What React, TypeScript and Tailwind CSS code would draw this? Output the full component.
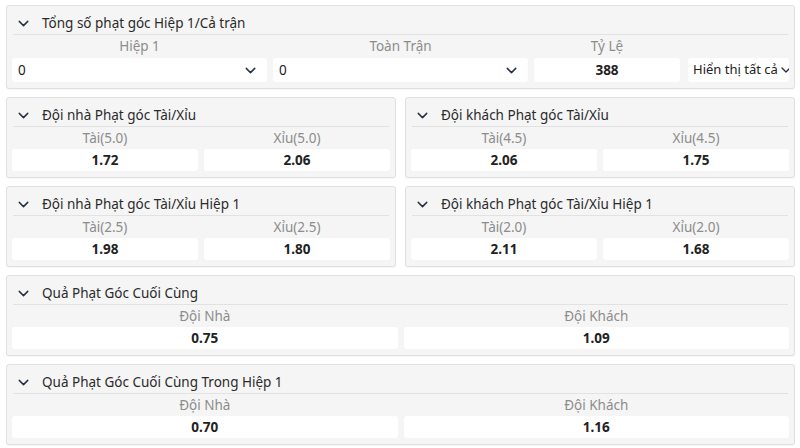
import { ChevronDown } from "lucide-react";

type Cell = { label: string; value: string };

function Header({ title }: { title: string }) {
  return (
    <div className="flex items-center h-[29px] pt-[6px] border-b border-[#e2e2e2] mx-[6px]">
      <ChevronDown size={17} strokeWidth={2} className="text-[#243044] ml-[2px] mr-[10px]" />
      <span className="text-[13.5px] text-[#2b2b2b]">{title}</span>
    </div>
  );
}

function OddsPanel({ title, cells }: { title: string; cells: Cell[] }) {
  return (
    <div className="bg-[#f5f5f5] border border-[#e0e0e0] rounded-[3px] pb-[6px] shadow-[0_1px_1px_rgba(0,0,0,0.04)]">
      <Header title={title} />
      <div className="flex gap-[6px] px-[5px]">
        {cells.map((c) => (
          <div key={c.label} className="flex-1 flex flex-col">
            <div className="h-[22px] flex items-center justify-center text-[13.5px] text-[#8c8c8c]">{c.label}</div>
            <div className="h-[22px] flex items-center justify-center bg-white rounded-[3px] text-[13.5px] font-bold text-[#222]">
              {c.value}
            </div>
          </div>
        ))}
      </div>
    </div>
  );
}

function SelectBox({ value }: { value: string }) {
  return (
    <div className="h-[24px] flex items-center justify-between bg-white rounded-[3px] pl-[6px] pr-[8px] text-[13.5px] text-[#222]">
      <span>{value}</span>
      <ChevronDown size={17} strokeWidth={2} className="text-[#243044]" />
    </div>
  );
}

export default function App() {
  return (
    <div className="w-[800px] h-[448px] bg-white pt-[5px] pl-[6px] pr-[5px] flex flex-col gap-[8px] font-['Noto_Sans',sans-serif]">
      <div className="shrink-0 bg-[#f5f5f5] border border-[#e0e0e0] rounded-[3px] pb-[6px] shadow-[0_1px_1px_rgba(0,0,0,0.04)]">
        <Header title="Tổng số phạt góc Hiệp 1/Cả trận" />
        <div className="flex px-[5px] items-end">
          <div className="w-[255px] shrink-0 mr-[6px] flex flex-col">
            <div className="h-[23px] flex items-center justify-center text-[13.5px] text-[#8c8c8c]">Hiệp 1</div>
            <SelectBox value="0" />
          </div>
          <div className="w-[255px] shrink-0 mr-[6px] flex flex-col">
            <div className="h-[23px] flex items-center justify-center text-[13.5px] text-[#8c8c8c]">Toàn Trận</div>
            <SelectBox value="0" />
          </div>
          <div className="w-[146px] shrink-0 mr-[8px] flex flex-col">
            <div className="h-[23px] flex items-center justify-center text-[13.5px] text-[#8c8c8c]">Tỷ Lệ</div>
            <div className="h-[24px] flex items-center justify-center bg-white rounded-[3px] text-[13.5px] font-bold text-[#222]">388</div>
          </div>
          <div className="flex-1 min-w-0 h-[24px] flex items-center justify-between bg-white rounded-[3px] pl-[5px] pr-[3px] text-[13px] text-[#222] overflow-hidden">
            <span className="whitespace-nowrap">Hiển thị tất cả</span>
            <ChevronDown size={16} strokeWidth={2} className="text-[#243044] shrink-0" />
          </div>
        </div>
      </div>

      <div className="shrink-0 grid grid-cols-2 gap-[9px]">
        <OddsPanel title="Đội nhà Phạt góc Tài/Xỉu" cells={[{ label: "Tài(5.0)", value: "1.72" }, { label: "Xỉu(5.0)", value: "2.06" }]} />
        <OddsPanel title="Đội khách Phạt góc Tài/Xỉu" cells={[{ label: "Tài(4.5)", value: "2.06" }, { label: "Xỉu(4.5)", value: "1.75" }]} />
      </div>

      <div className="shrink-0 grid grid-cols-2 gap-[9px]">
        <OddsPanel title="Đội nhà Phạt góc Tài/Xỉu Hiệp 1" cells={[{ label: "Tài(2.5)", value: "1.98" }, { label: "Xỉu(2.5)", value: "1.80" }]} />
        <OddsPanel title="Đội khách Phạt góc Tài/Xỉu Hiệp 1" cells={[{ label: "Tài(2.0)", value: "2.11" }, { label: "Xỉu(2.0)", value: "1.68" }]} />
      </div>

      <OddsPanel title="Quả Phạt Góc Cuối Cùng" cells={[{ label: "Đội Nhà", value: "0.75" }, { label: "Đội Khách", value: "1.09" }]} />
      <OddsPanel title="Quả Phạt Góc Cuối Cùng Trong Hiệp 1" cells={[{ label: "Đội Nhà", value: "0.70" }, { label: "Đội Khách", value: "1.16" }]} />
    </div>
  );
}
